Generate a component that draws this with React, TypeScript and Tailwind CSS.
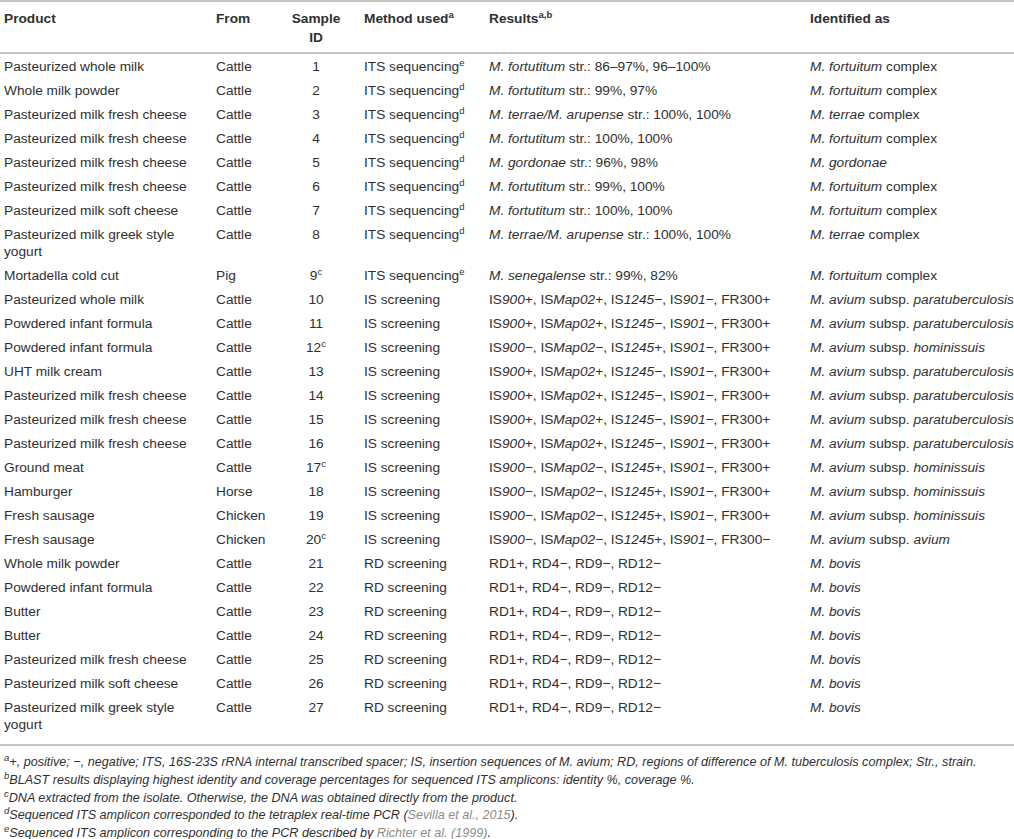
import React from 'react'

type Row = {
  product: string
  from: string
  id: string
  idSup?: string
  method: string
  methodSup?: string
  result: React.ReactNode
  identified: React.ReactNode
}

const P = 'Pasteurized milk fresh cheese'
const PIF = 'Powdered infant formula'

const fort = <><i>M. fortuitum</i> complex</>
const terr = <><i>M. terrae</i> complex</>
const paratb = <><i>M. avium</i> subsp. <i>paratuberculosis</i></>
const homin = <><i>M. avium</i> subsp. <i>hominissuis</i></>
const bovis = <i>M. bovis</i>

const its = (s: string) => <><i>M. fortutitum</i> str.: {s}</>
const terrRes = <><i>M. terrae/M. arupense</i> str.: 100%, 100%</>

function isRes(a: string, b: string, c: string, d: string, e: string) {
  return (
    <>IS<i>900</i>{a}, IS<i>Map02</i>{b}, IS<i>1245</i>{c}, IS<i>901</i>{d}, FR300{e}</>
  )
}

const M = '−'
const rd = <>RD1+, RD4{M}, RD9{M}, RD12{M}</>

const rows: Row[] = [
  { product: 'Pasteurized whole milk', from: 'Cattle', id: '1', method: 'ITS sequencing', methodSup: 'e', result: its('86–97%, 96–100%'), identified: fort },
  { product: 'Whole milk powder', from: 'Cattle', id: '2', method: 'ITS sequencing', methodSup: 'd', result: its('99%, 97%'), identified: fort },
  { product: P, from: 'Cattle', id: '3', method: 'ITS sequencing', methodSup: 'd', result: terrRes, identified: terr },
  { product: P, from: 'Cattle', id: '4', method: 'ITS sequencing', methodSup: 'd', result: its('100%, 100%'), identified: fort },
  { product: P, from: 'Cattle', id: '5', method: 'ITS sequencing', methodSup: 'd', result: <><i>M. gordonae</i> str.: 96%, 98%</>, identified: <i>M. gordonae</i> },
  { product: P, from: 'Cattle', id: '6', method: 'ITS sequencing', methodSup: 'd', result: its('99%, 100%'), identified: fort },
  { product: 'Pasteurized milk soft cheese', from: 'Cattle', id: '7', method: 'ITS sequencing', methodSup: 'd', result: its('100%, 100%'), identified: fort },
  { product: 'Pasteurized milk greek style yogurt', from: 'Cattle', id: '8', method: 'ITS sequencing', methodSup: 'd', result: terrRes, identified: terr },
  { product: 'Mortadella cold cut', from: 'Pig', id: '9', idSup: 'c', method: 'ITS sequencing', methodSup: 'e', result: <><i>M. senegalense</i> str.: 99%, 82%</>, identified: fort },
  { product: 'Pasteurized whole milk', from: 'Cattle', id: '10', method: 'IS screening', result: isRes('+', '+', M, M, '+'), identified: paratb },
  { product: PIF, from: 'Cattle', id: '11', method: 'IS screening', result: isRes('+', '+', M, M, '+'), identified: paratb },
  { product: PIF, from: 'Cattle', id: '12', idSup: 'c', method: 'IS screening', result: isRes(M, M, '+', M, '+'), identified: homin },
  { product: 'UHT milk cream', from: 'Cattle', id: '13', method: 'IS screening', result: isRes('+', '+', M, M, '+'), identified: paratb },
  { product: P, from: 'Cattle', id: '14', method: 'IS screening', result: isRes('+', '+', M, M, '+'), identified: paratb },
  { product: P, from: 'Cattle', id: '15', method: 'IS screening', result: isRes('+', '+', M, M, '+'), identified: paratb },
  { product: P, from: 'Cattle', id: '16', method: 'IS screening', result: isRes('+', '+', M, M, '+'), identified: paratb },
  { product: 'Ground meat', from: 'Cattle', id: '17', idSup: 'c', method: 'IS screening', result: isRes(M, M, '+', M, '+'), identified: homin },
  { product: 'Hamburger', from: 'Horse', id: '18', method: 'IS screening', result: isRes(M, M, '+', M, '+'), identified: homin },
  { product: 'Fresh sausage', from: 'Chicken', id: '19', method: 'IS screening', result: isRes(M, M, '+', M, '+'), identified: homin },
  { product: 'Fresh sausage', from: 'Chicken', id: '20', idSup: 'c', method: 'IS screening', result: isRes(M, M, '+', M, M), identified: <><i>M. avium</i> subsp. <i>avium</i></> },
  { product: 'Whole milk powder', from: 'Cattle', id: '21', method: 'RD screening', result: rd, identified: bovis },
  { product: PIF, from: 'Cattle', id: '22', method: 'RD screening', result: rd, identified: bovis },
  { product: 'Butter', from: 'Cattle', id: '23', method: 'RD screening', result: rd, identified: bovis },
  { product: 'Butter', from: 'Cattle', id: '24', method: 'RD screening', result: rd, identified: bovis },
  { product: P, from: 'Cattle', id: '25', method: 'RD screening', result: rd, identified: bovis },
  { product: 'Pasteurized milk soft cheese', from: 'Cattle', id: '26', method: 'RD screening', result: rd, identified: bovis },
  { product: 'Pasteurized milk greek style yogurt', from: 'Cattle', id: '27', method: 'RD screening', result: rd, identified: bovis },
]

function Sup({ children }: { children: React.ReactNode }) {
  return <sup className="text-[9.5px] top-[-5px]">{children}</sup>
}

export default function App() {
  return (
    <div className="w-[1014px] h-[839px] overflow-hidden bg-white text-[#303030]" style={{ fontFamily: '"Liberation Sans", Arial, sans-serif' }}>
      <table className="w-[1014px] table-fixed border-collapse border-y-2 border-[#c4c4c4] text-[13.7px]">
        <colgroup>
          <col className="w-[212px]" />
          <col className="w-[70px]" />
          <col className="w-[72px]" />
          <col className="w-[131px]" />
          <col className="w-[321px]" />
          <col className="w-[208px]" />
        </colgroup>
        <thead>
          <tr className="border-b-2 border-[#c4c4c4] font-bold leading-[19px] align-top text-left">
            <th className="pl-[4px] pt-[7px] pb-[5px] text-left">Product</th>
            <th className="pl-[4px] pt-[7px] pb-[5px] text-left">From</th>
            <th className="pr-[4px] pt-[7px] pb-[5px] text-center">Sample<br />ID</th>
            <th className="pl-[10px] pt-[7px] pb-[5px] text-left">Method used<Sup>a</Sup></th>
            <th className="pl-[4px] pt-[7px] pb-[5px] text-left">Results<Sup>a,b</Sup></th>
            <th className="pl-[4px] pt-[7px] pb-[5px] text-left">Identified as</th>
          </tr>
        </thead>
        <tbody className="leading-[17px] align-top">
          {rows.map((r, i) => {
            const last = i === rows.length - 1
            const py = last ? 'pt-[3.5px] pb-[11.5px]' : 'py-[3.5px]'
            return (
              <tr key={i}>
                <td className={`pl-[4px] pr-[18px] ${py}`}>{r.product}</td>
                <td className={`pl-[4px] ${py}`}>{r.from}</td>
                <td className={`pr-[4px] text-center ${py}`}>{r.id}{r.idSup && <Sup>{r.idSup}</Sup>}</td>
                <td className={`pl-[10px] ${py}`}>{r.method}{r.methodSup && <Sup>{r.methodSup}</Sup>}</td>
                <td className={`pl-[4px] ${py}`}>{r.result}</td>
                <td className={`pl-[4px] ${py}`}>{r.identified}</td>
              </tr>
            )
          })}
        </tbody>
      </table>
      <div className="pl-[4px] pt-[8px] italic text-[12.6px] leading-[17.8px]">
        <p><Sup>a</Sup>+, positive; −, negative; ITS, 16S-23S rRNA internal transcribed spacer; IS, insertion sequences of M. avium; RD, regions of difference of M. tuberculosis complex; Str., strain.</p>
        <p><Sup>b</Sup>BLAST results displaying highest identity and coverage percentages for sequenced ITS amplicons: identity %, coverage %.</p>
        <p><Sup>c</Sup>DNA extracted from the isolate. Otherwise, the DNA was obtained directly from the product.</p>
        <p><Sup>d</Sup>Sequenced ITS amplicon corresponded to the tetraplex real-time PCR (<span className="text-[#8c8c8c]">Sevilla et al., 2015</span>).</p>
        <p><Sup>e</Sup>Sequenced ITS amplicon corresponding to the PCR described by <span className="text-[#8c8c8c]">Richter et al. (1999)</span>.</p>
      </div>
    </div>
  )
}
